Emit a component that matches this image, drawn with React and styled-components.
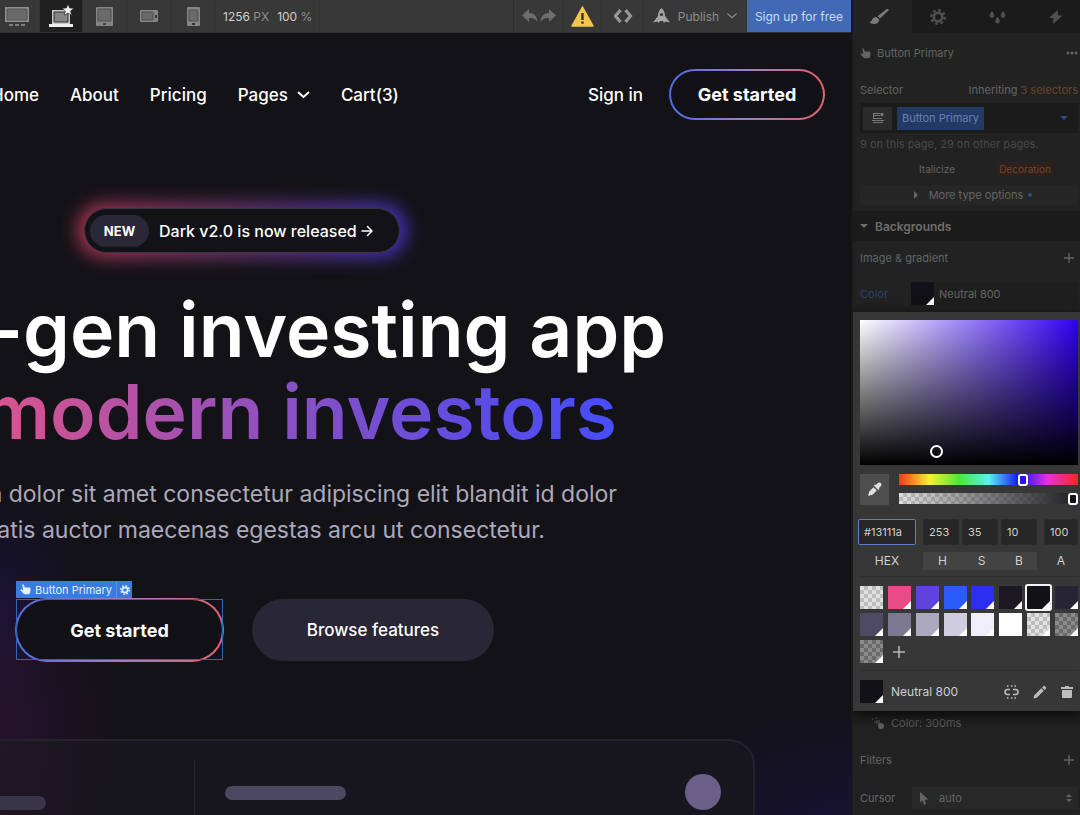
import React from "react";
import styled, { createGlobalStyle, css } from "styled-components";

const GlobalStyle = createGlobalStyle`
  *, *::before, *::after { box-sizing: border-box; }
  body { margin: 0; background: #131217; color: #fff; font-family: Inter, "Liberation Sans", sans-serif; overflow-x: hidden; }
  button, input, select { font: inherit; color: inherit; margin: 0; }
  button { border: 0; padding: 0; background: none; cursor: pointer; }
  a { color: inherit; text-decoration: none; }
  h1, h2, p { margin: 0; }
  svg { display: block; flex: none; }
`;

const Shell = styled.div`
  display: grid;
  grid-template-columns: minmax(0, 1fr) 229px;
  height: 100vh;
  overflow: hidden;
`;

const Stage = styled.div`
  display: flex;
  flex-direction: column;
  min-width: 0;
`;

/* ---------- top bar ---------- */

const Bar = styled.header`
  display: flex;
  flex: none;
  height: 33px;
  background: #383838;
  border-bottom: 1px solid #303030;
  font-size: 12px;
  color: #8d8d8d;
`;

const BarButton = styled.button`
  display: flex;
  align-items: center;
  justify-content: center;
  gap: 8px;
  width: ${(p) => p.$w}px;
  flex: none;
  border-right: 1px solid #323232;
  background: ${(p) => (p.$active ? "#202020" : "transparent")};
  &:first-child { padding-right: 6px; }
`;

const Zoom = styled.div`
  display: flex;
  align-items: center;
  gap: 8px;
  width: 105px;
  padding-left: 8px;
  white-space: nowrap;
  border-right: 1px solid #323232;
  b { font-weight: 400; color: #cfcfcf; }
`;

const BarGap = styled.div`
  flex: 1;
  border-right: 1px solid #303030;
`;

const SignUp = styled.a`
  display: flex;
  align-items: center;
  justify-content: center;
  width: 104px;
  height: 32px;
  background: #4169b5;
  color: #cbd8f3;
  white-space: nowrap;
`;

/* ---------- website canvas ---------- */

const Canvas = styled.main`
  flex: 1;
  display: flex;
  flex-direction: column;
  overflow: hidden;
  padding-top: 36px;
  background:
    radial-gradient(ellipse 140px 160px at -20px 690px, rgba(62, 18, 78, 0.5), transparent),
    radial-gradient(ellipse 110px 110px at -20px 560px, rgba(30, 20, 90, 0.5), transparent),
    radial-gradient(ellipse 240px 150px at 100% 104%, rgba(28, 20, 84, 0.55), transparent),
    #131217;
`;

const SiteNav = styled.nav`
  display: flex;
  align-items: center;
  flex: none;
  height: 51px;
  gap: 31px;
  margin-left: -9px;
  padding-right: 26px;
  font-size: 17px;
  font-weight: 500;
  white-space: nowrap;
`;

const NavLink = styled.a`
  display: flex;
  align-items: center;
  gap: 9px;
`;

const NavSide = styled.div`
  display: flex;
  align-items: center;
  gap: 26px;
  margin-left: auto;
`;

const GradientButton = styled.button`
  width: ${(p) => p.$w}px;
  height: ${(p) => p.$h}px;
  border: 2px solid transparent;
  border-radius: 32px;
  background:
    linear-gradient(#121116, #121116) padding-box,
    linear-gradient(90deg, #4f6be6, #9d80c4 50%, #e0626f) border-box;
  font-size: 18px;
  font-weight: 700;
`;

const Hero = styled.section`
  display: flex;
  flex-direction: column;
  align-items: flex-start;
  flex: none;
  padding-top: 88px;
`;

const Release = styled.a`
  position: relative;
  z-index: 0;
  display: flex;
  align-items: center;
  gap: 10px;
  width: 316px;
  height: 45px;
  margin-left: 84px;
  padding-left: 6px;
  border-radius: 24px;
  font-size: 16px;
  font-weight: 500;
  white-space: nowrap;
  &::before, &::after { content: ""; position: absolute; border-radius: 32px; }
  &::before {
    z-index: -2;
    inset: -5px -7px;
    background: linear-gradient(90deg, #c23a58, #7a3b80 50%, #4a38d8);
    filter: blur(9px);
    opacity: 0.85;
  }
  &::after {
    z-index: -1;
    inset: 0;
    background: #131217;
    border: 1px solid #3c3343;
  }
`;

const ReleaseText = styled.span`
  display: flex;
  align-items: center;
  gap: 4px;
`;

const NewTag = styled.span`
  display: flex;
  align-items: center;
  justify-content: center;
  width: 59px;
  height: 32px;
  border-radius: 16px;
  background: #2a2737;
  font-size: 13px;
  font-weight: 700;
`;

const Line = styled.span`
  display: flex;
  justify-content: flex-end;
  width: ${(p) => p.$w}px;
`;

const Headline = styled.h1`
  margin-top: 36px;
  font-size: 75px;
  line-height: 82px;
  font-weight: 600;
  white-space: nowrap;
`;

const Gradient = styled.span`
  background: linear-gradient(90deg, #dc548c, #8e50bf 45%, #5b4ce4 80%, #474dfb);
  background-clip: text;
  -webkit-background-clip: text;
  color: transparent;
`;

const Lead = styled.p`
  margin-top: 23px;
  font-size: 23px;
  line-height: 36px;
  color: #aca9ba;
  white-space: nowrap;
`;

const Actions = styled.div`
  display: flex;
  align-items: center;
  gap: 28px;
  margin-top: 50px;
  padding-left: 15px;
`;

const Selected = styled.div`
  position: relative;
  display: flex;
`;

const Outline = styled.div`
  position: absolute;
  inset: 1px 1px 2px;
  border: 1px solid #2f66b8;
  pointer-events: none;
`;

const SelectedTag = styled.div`
  position: absolute;
  left: 1px;
  top: -17px;
  display: flex;
  height: 17px;
  background: #3a7be0;
  font-size: 11px;
  white-space: nowrap;
  color: #e5eefc;
  span, button { display: flex; align-items: center; gap: 4px; }
  span { padding: 0 4px; }
  button { width: 16px; justify-content: center; border-left: 1px solid #5b92e8; }
`;

const SolidButton = styled.button`
  width: 242px;
  height: 62px;
  border-radius: 32px;
  background: #292635;
  font-size: 17px;
  font-weight: 500;
`;

const Mockup = styled.section`
  display: flex;
  flex: 1 0 76px;
  margin: 77px 96px 0 -40px;
  border: 2px solid #25222c;
  border-bottom: 0;
  border-top-right-radius: 26px;
  background: linear-gradient(90deg, rgba(38, 24, 40, 0.6), #17151e 160px);
`;

const MockSide = styled.div`
  width: 233px;
  margin-top: 20px;
  padding: 35px 0 0 38px;
  border-right: 1px solid #25232e;
`;

const MockMain = styled.div`
  display: flex;
  flex: 1;
  justify-content: space-between;
  padding: 33px 32px 0 30px;
`;

const Skeleton = styled.div`
  width: ${(p) => p.$w}px;
  height: 14px;
  margin-top: ${(p) => p.$top || 0}px;
  border-radius: ${(p) => (p.$open ? "0 8px 8px 0" : "8px")};
  background: ${(p) => p.$c};
`;

const Avatar = styled.div`
  width: 36px;
  height: 36px;
  border-radius: 50%;
  background: #6a5f88;
`;

/* ---------- style panel ---------- */

const Panel = styled.aside`
  display: flex;
  flex-direction: column;
  background: #222222;
  border-left: 2px solid #191919;
  color: #646464;
  font-size: 11px;
  overflow: hidden;
  white-space: nowrap;
`;

const Tabs = styled.div`
  display: flex;
  flex: none;
  height: 33px;
  background: #1b1b1b;
`;

const Tab = styled.button`
  display: flex;
  align-items: center;
  justify-content: center;
  flex: 0 0 59px;
  padding-right: 7px;
  background: ${(p) => (p.$active ? "#222222" : "transparent")};
  color: ${(p) => (p.$active ? "#7a7a7a" : "#505050")};
`;

const Row = styled.div`
  display: flex;
  align-items: center;
  flex: none;
  gap: ${(p) => p.$gap || 0}px;
  height: ${(p) => p.$h}px;
  padding: ${(p) => p.$pt || 0}px ${(p) => p.$pr ?? 6}px 0 ${(p) => p.$pl || 7}px;
`;

const Push = styled.span`
  margin-left: auto;
`;

const Orange = styled.span`
  color: #6b4229;
`;

const Note = styled.p`
  flex: none;
  padding-left: 7px;
  line-height: 22px;
  color: #484848;
`;

const SelectorBox = styled.div`
  display: flex;
  align-items: center;
  flex: none;
  gap: 5px;
  height: 30px;
  margin: 0 2px 0 7px;
  padding: 0 10px 0 3px;
  background: #1b1b1b;
  > svg { margin-left: auto; }
`;

const StateButton = styled.button`
  display: flex;
  align-items: center;
  justify-content: center;
  width: 29px;
  height: 23px;
  background: #2b2b2b;
  color: #777;
`;

const ClassChip = styled.button`
  height: 23px;
  padding: 0 5px;
  background: #233a67;
  color: #6780ad;
`;

const TypeRow = styled.div`
  display: grid;
  grid-template-columns: 88px 88px;
  align-items: center;
  justify-items: center;
  flex: none;
  height: 28px;
  padding-left: 40px;
  font-size: 10px;
`;

const Decoration = styled.span`
  padding: 1px 2px;
  color: #7a4228;
  background: #2c211d;
`;

const MoreButton = styled.button`
  display: flex;
  align-items: center;
  justify-content: center;
  gap: 9px;
  flex: none;
  height: 20px;
  margin: 2px 2px 6px 7px;
  padding-left: 6px;
  background: #262626;
`;

const Dot = styled.i`
  width: 4px;
  height: 4px;
  margin-left: -4px;
  border-radius: 50%;
  background: #2f4e86;
`;

const SectionHead = styled.h2`
  display: flex;
  align-items: center;
  gap: 7px;
  flex: none;
  height: 30px;
  padding-left: 7px;
  background: #1b1b1b;
  font-size: 12px;
  font-weight: 600;
  color: #6e6e6e;
`;

const ColorRow = styled.div`
  display: flex;
  align-items: center;
  flex: none;
  height: 37px;
  padding: 0 2px 0 7px;
`;

const ColorLabel = styled.span`
  width: 51px;
  color: #2c4266;
`;

const ColorValue = styled.div`
  display: flex;
  align-items: center;
  gap: 5px;
  flex: 1;
  height: 24px;
  background: #1f1f1f;
`;

const checker = "repeating-conic-gradient(#bdbdbd 0 25%, #e0e0e0 0 50%) 0 0 / 8px 8px";
const darkChecker = "repeating-conic-gradient(#6a6a6a 0 25%, #8a8a8a 0 50%) 0 0 / 8px 8px";

const Swatch = styled.button`
  position: relative;
  width: 23px;
  height: 23px;
  flex: none;
  background: ${(p) => p.$c};
  ${(p) => p.$on && css`
    border-radius: 1px;
    box-shadow: 0 0 0 2px #f2f2f2;
  `}
  ${(p) => !p.$plain && css`
    &::after {
      content: "";
      position: absolute;
      right: 0;
      bottom: 0;
      border: 4px solid #fff;
      border-top-color: transparent;
      border-left-color: transparent;
    }
  `}
`;

const Picker = styled.div`
  position: relative;
  z-index: 2;
  flex: none;
  padding: 8px 2px 8px 7px;
  background: #373737;
  color: #cfcfcf;
  box-shadow: 0 4px 12px 2px #0c0c0c;
`;

const Field = styled.div`
  position: relative;
  height: 145px;
  background:
    linear-gradient(transparent, #000),
    linear-gradient(90deg, #fff, #2f00f0);
`;

const Knob = styled.button`
  position: absolute;
  left: 35%;
  top: 90%;
  width: 13px;
  height: 13px;
  margin: -6px;
  border: 2px solid #fff;
  border-radius: 50%;
`;

const Sliders = styled.div`
  display: grid;
  grid-template-columns: 29px minmax(0, 1fr);
  grid-template-rows: 11px 11px;
  column-gap: 10px;
  row-gap: 8px;
  align-items: center;
  margin-top: 9px;
`;

const Dropper = styled.button`
  display: flex;
  align-items: center;
  justify-content: center;
  grid-row: 1 / 3;
  height: 31px;
  background: #4e4e4e;
  color: #e0e0e0;
`;

const Range = styled.input`
  appearance: none;
  width: 100%;
  height: 11px;
  background: ${(p) => p.$bg};
  &::-webkit-slider-thumb {
    appearance: none;
    width: 10px;
    height: 12px;
    border: 2px solid #fff;
    border-radius: 3px;
    background: ${(p) => p.$thumb};
  }
`;

const Fields = styled.div`
  display: grid;
  grid-template-columns: 58px 40px 36px 36px 38px;
  column-gap: 3px;
  margin: 15px 0 0 -2px;
`;

const FieldLabel = styled.label`
  display: flex;
  flex-direction: column;
  align-items: center;
  gap: 7px;
  margin-left: ${(p) => p.$ml || 0}px;
  font-size: 12px;
  span {
    align-self: stretch;
    margin: 0 ${(p) => (p.$fill ? "-3px" : "0")} 0 0;
    line-height: 18px;
    text-align: center;
    background: ${(p) => (p.$shade ? "#434343" : "transparent")};
  }
`;

const TextField = styled.input`
  width: 100%;
  height: 26px;
  padding: 0 5px;
  border: 1px solid ${(p) => (p.$focus ? "#5b7fc4" : "#2b2b2b")};
  border-radius: 2px;
  background: #272727;
  font-size: 11px;
  outline: 0;
`;

const Rule = styled.hr`
  height: 1px;
  margin: ${(p) => p.$m};
  border: 0;
  background: #303030;
`;

const Swatches = styled.div`
  display: grid;
  grid-template-columns: repeat(8, 23px);
  justify-content: space-between;
  row-gap: 4px;
`;

const AddButton = styled.button`
  display: flex;
  align-items: center;
  justify-content: center;
  color: #b5b5b5;
`;

const Current = styled.div`
  display: flex;
  align-items: center;
  gap: 8px;
  font-size: 12px;
`;

const Tools = styled.div`
  display: flex;
  align-items: center;
  gap: 14px;
  margin-left: auto;
  padding-right: 5px;
  color: #bdbdbd;
`;

const CursorLabel = styled.label`
  width: 52px;
`;

const CursorSelect = styled.div`
  display: flex;
  align-items: center;
  gap: 10px;
  flex: 1;
  height: 22px;
  padding: 0 6px 0 8px;
  background: #282828;
  select { flex: 1; appearance: none; border: 0; background: none; outline: 0; padding: 0; }
`;

/* ---------- icons ---------- */

const Svg = ({ w = 16, h, vb, children, ...rest }) => (
  <svg width={w} height={h || w} viewBox={vb || `0 0 ${w} ${h || w}`} fill="currentColor" aria-hidden="true" {...rest}>
    {children}
  </svg>
);

const Monitor = () => (
  <Svg w={26} h={20}>
    <path d="M1 1h24v15H1z" fill="#8f8f8f" />
    <path d="M3 3h20v11H3z" fill="#6a6a6a" stroke="#555" />
    <path d="M5 18h4v2H5zM11 18h4v2h-4zM17 18h4v2h-4z" fill="#7f7f7f" />
  </Svg>
);
const Laptop = () => (
  <Svg w={26} h={24}>
    <path d="M4 6h18v14H4z" fill="#c9c9c9" />
    <path d="M6 8h14v10H6z" fill="#858585" stroke="#333" />
    <path d="M1 20h24v3H1z" fill="#eee" />
    <path d="m20 0 1.600 4 4.200.3-3.200 2.700 1 4.200L20 9l-3.700 2.200 1-4.200-3.200-2.700 4.300-.3z" fill="#f0f0f0" stroke="#202020" strokeWidth=".6" />
  </Svg>
);
const Tablet = () => (
  <Svg w={17} h={19}>
    <rect width="17" height="19" rx="1" fill="#858585" />
    <path d="M2 2h13v12H2z" fill="#6a6a6a" stroke="#505050" />
    <path d="M7 16h3v2H7z" fill="#444" />
  </Svg>
);
const PhoneWide = () => (
  <Svg w={18} h={12}>
    <rect width="18" height="12" rx="1" fill="#858585" />
    <path d="M2 2h11v8H2z" fill="#6a6a6a" stroke="#505050" />
    <path d="M15 5h2v3h-2z" fill="#333" />
  </Svg>
);
const Phone = () => (
  <Svg w={13} h={19}>
    <rect width="13" height="19" rx="1" fill="#858585" />
    <path d="M2 3h9v11H2z" fill="#6a6a6a" stroke="#505050" />
    <path d="M5 16h3v2H5z" fill="#333" />
  </Svg>
);
const UndoRedo = () => (
  <Svg w={34} h={14} fill="#6d6d6d">
    <path d="M7 0v4c5 0 8 3 8.500 9C13 9.500 11 9 7 9v4L0 6.500z" />
    <path d="M27 0v4c-5 0-8 3-8.500 9 2.500-3.500 4.500-4 8.500-4v4l7-6.500z" />
  </Svg>
);
const Warning = () => (
  <Svg w={23} h={21}>
    <path d="M11.500 1 22 20H1z" fill="#f2c64d" stroke="#f2c64d" strokeWidth="1.500" strokeLinejoin="round" />
    <path d="M10.300 7h2.400v7h-2.400zM10.300 15.500h2.400v2.300h-2.400z" fill="#3b3420" />
  </Svg>
);
const Code = () => (
  <Svg w={20} h={14} fill="none" stroke="#969696" strokeWidth="3.200">
    <path d="M7.500 1 2.500 7l5 6M12.500 1l5 6-5 6" />
  </Svg>
);
const Rocket = () => (
  <Svg w={17} h={16} fill="#a5a5a5">
    <path d="M8.500 0C11 2 12 5 12 8l5 6.500-4.500-1L11 15l-1-2H7l-1 2-1.500-1.500-4.500 1L5 8c0-3 1-6 3.500-8z" />
    <circle cx="8.500" cy="6.500" r="1.600" fill="#383838" />
  </Svg>
);
const Chevron = ({ w = 10, s = 1.5 }) => (
  <Svg w={w} h={8} vb="0 0 12 8" fill="none" stroke="currentColor" strokeWidth={s} strokeLinecap="round">
    <path d="m1 1.500 5 4.500 5-4.500" />
  </Svg>
);
const Arrow = () => (
  <Svg w={12} h={12} fill="none" stroke="currentColor" strokeWidth="1.500" strokeLinecap="round" strokeLinejoin="round">
    <path d="M1 6h10M6.500 1.500 11 6l-4.500 4.500" />
  </Svg>
);
const Hand = ({ w = 11 }) => (
  <Svg w={w} vb="0 0 12 12">
    <path d="M2.500.5c.8-.6 1.500-.2 1.800.6l1 2.700h4.600c1.200 0 1.700.8 1.600 1.800l-.3 3.200c-.2 1.700-1 2.500-2.500 2.500H6c-1.200 0-2-.5-2.800-1.500L.5 6.800c-.4-.7.3-1.400 1.100-1L3.300 7z" />
  </Svg>
);
const Gear = ({ w = 16 }) => (
  <Svg w={w} vb="0 0 16 16" fill="none" stroke="currentColor">
    <circle cx="8" cy="8" r="4.200" strokeWidth="2.600" />
    <circle cx="8" cy="8" r="6.700" strokeWidth="2.400" strokeDasharray="2.630 2.630" />
  </Svg>
);
const Brush = () => (
  <Svg w={20} h={16}>
    <path d="m19.500 1.500-8.500 8-2.500-2.300L17.500.3c1.500-.8 2.800.2 2 1.200zM7.500 8l2.700 2.500c0 3-2.500 4.500-5.200 4.500-2 0-3.800-.7-5-2 2.500 0 2.500-1 3.300-2.800C4 8.700 5.500 7.700 7.500 8z" />
  </Svg>
);
const Drops = () => (
  <Svg w={17} h={14}>
    <path d="M3 1c1.200 2 2.300 3 2.300 4.600a2.300 2.300 0 0 1-4.600 0C.7 4 1.800 3 3 1zM14 1c1.200 2 2.300 3 2.300 4.600a2.300 2.300 0 0 1-4.600 0C11.700 4 12.800 3 14 1zM8.500 6.500c1.200 2 2.300 3 2.300 4.600a2.300 2.300 0 0 1-4.600 0c0-1.600 1.100-2.600 2.300-4.600z" />
  </Svg>
);
const Bolt = () => (
  <Svg w={14} h={14}>
    <path d="M8.500 0 0 8h4.500L4 14l9.500-8.500H9z" />
  </Svg>
);
const Plus = ({ w = 10 }) => (
  <Svg w={w} vb="0 0 12 12" fill="none" stroke="currentColor" strokeWidth="1.600">
    <path d="M6 0v12M0 6h12" />
  </Svg>
);
const Triangle = ({ right, c = "currentColor" }) => (
  <Svg w={8} h={8} fill={c}>
    <path d={right ? "M2 0v8l4-4z" : "M0 2h8L4 6z"} />
  </Svg>
);
const Breakpoint = () => (
  <Svg w={12} h={12}>
    <path d="M1 1h7v1H2v1h6v1H2v2h8v1H1zM0 8h12v1H0zM1 10h10v1H1z" />
    <circle cx="10" cy="2.500" r="1.700" />
  </Svg>
);
const DropperIcon = () => (
  <Svg w={14} h={14}>
    <path d="M9.600 1.200c1-1 2.300-1 3.200-.1s.9 2.200-.1 3.200l-1.900 1.900.7.700-1.200 1.200-4.500-4.500L7 2.400l.7.700zM5.500 5.200l3.300 3.300-4 4c-.6.600-1.600.5-2.300.6L1 14l-1-1 .9-1.500c.1-.7 0-1.700.6-2.300z" />
  </Svg>
);
const Unlink = () => (
  <Svg w={15} h={14} fill="none" stroke="currentColor" strokeWidth="1.500">
    <path d="M6 4.500H3.500a2.500 2.500 0 0 0 0 5H6M9 4.500h2.500a2.500 2.500 0 0 1 0 5H9" />
    <path d="M3 1h1.500M7 1h1.500M10.500 1H12M3 13h1.500M7 13h1.500M10.500 13H12" />
  </Svg>
);
const Pencil = () => (
  <Svg w={14} h={14}>
    <path d="M10.300 1.200c.5-.5 1-.5 1.500 0l1 1c.5.5.5 1 0 1.500l-1.200 1.200-2.500-2.500zM8.300 3.200l2.500 2.500-7 7L.5 13.500l.8-3.300z" />
  </Svg>
);
const Trash = () => (
  <Svg w={12} h={12}>
    <path d="M4 0h4v1h4v2H0V1h4zM1 4h10v6.500c0 1-.5 1.500-1.500 1.500h-7C1.500 12 1 11.500 1 10.500z" />
  </Svg>
);
const Transition = () => (
  <Svg w={12} h={12}>
    <path d="M0 1h2v2H0zM3 0h2v2H3zM2 4h2v2H2z" opacity=".5" />
    <path d="M4 3h4v4H4z" opacity=".6" />
    <circle cx="9" cy="9" r="3" />
  </Svg>
);
const Pointer = () => (
  <Svg w={9} h={13}>
    <path d="M0 0v10.500l2.500-2 1.700 4.200 2-.8-1.700-4.100L8.500 7.500z" />
  </Svg>
);
const UpDown = () => (
  <Svg w={6} h={8}>
    <path d="M0 3h6L3 0zM0 5h6L3 8z" />
  </Svg>
);
const More = () => (
  <Svg w={12} h={4}>
    <circle cx="2" cy="2" r="1.500" /><circle cx="6" cy="2" r="1.500" /><circle cx="10" cy="2" r="1.500" />
  </Svg>
);

/* ---------- data ---------- */

const devices = [
  ["Large desktop", Monitor, 40],
  ["Desktop", Laptop, 43],
  ["Tablet", Tablet, 44],
  ["Mobile landscape", PhoneWide, 45],
  ["Mobile portrait", Phone, 43],
];

const palette = [
  { c: checker, plain: true }, { c: "#e94b87" }, { c: "#6042dc" }, { c: "#2b5cfa" },
  { c: "#2c2ef0" }, { c: "#1b1823" }, { c: "#131118", on: true }, { c: "#272436" },
  { c: "#4f4a63" }, { c: "#7c7891" }, { c: "#aca8bd" }, { c: "#cfcbe0" },
  { c: "#f0eef8" }, { c: "#ffffff" }, { c: checker }, { c: darkChecker }, { c: darkChecker },
];

const hue = "linear-gradient(90deg, #f03a1e, #f5f032 17%, #4be83c 34%, #5cf0f0 50%, #1414f0 67%, #e632dc 83%, #f0281e)";
const alpha = `linear-gradient(90deg, transparent, #2b2b2f 92%), ${checker}`;

export default function App() {
  return (
    <>
      <GlobalStyle />
      <Shell>
        <Stage>
          <Bar>
            {devices.map(([name, Icon, w]) => (
              <BarButton key={name} aria-label={name} $w={w} $active={name === "Desktop"}>
                <Icon />
              </BarButton>
            ))}
            <Zoom>
              <span><b>1256</b> PX</span>
              <span><b>100</b> %</span>
            </Zoom>
            <BarGap />
            <BarButton $w={50} aria-label="Undo and redo"><UndoRedo /></BarButton>
            <BarButton $w={38} aria-label="Warnings"><Warning /></BarButton>
            <BarButton $w={42} aria-label="Export code"><Code /></BarButton>
            <BarButton $w={103}>
              <Rocket /> Publish <Chevron />
            </BarButton>
            <SignUp href="#signup">Sign up for free</SignUp>
          </Bar>

          <Canvas>
            <SiteNav>
              <NavLink href="#home">Home</NavLink>
              <NavLink href="#about">About</NavLink>
              <NavLink href="#pricing">Pricing</NavLink>
              <NavLink href="#pages">Pages <Chevron w={13} s={1.8} /></NavLink>
              <NavLink href="#cart">Cart(3)</NavLink>
              <NavSide>
                <NavLink href="#signin">Sign in</NavLink>
                <GradientButton $w={156} $h={51}>Get started</GradientButton>
              </NavSide>
            </SiteNav>

            <Hero>
              <Release href="#release">
                <NewTag>NEW</NewTag>
                <ReleaseText>Dark v2.0 is now released <Arrow /></ReleaseText>
              </Release>
              <Headline>
                <Line $w={666}>-gen investing app</Line>
                <Line $w={617}><Gradient>modern investors</Gradient></Line>
              </Headline>
              <Lead>
                <Line $w={617}>n dolor sit amet consectetur adipiscing elit blandit id dolor</Line>
                <Line $w={545}>natis auctor maecenas egestas arcu ut consectetur.</Line>
              </Lead>
              <Actions>
                <Selected>
                  <GradientButton $w={209} $h={64}>Get started</GradientButton>
                  <Outline />
                  <SelectedTag>
                    <span><Hand /> Button Primary</span>
                    <button aria-label="Element settings"><Gear w={10} /></button>
                  </SelectedTag>
                </Selected>
                <SolidButton>Browse features</SolidButton>
              </Actions>
            </Hero>

            <Mockup>
              <MockSide>
                <Skeleton $w={46} $c="#39354a" $open />
              </MockSide>
              <MockMain>
                <Skeleton $w={121} $top={12} $c="#4d4862" />
                <Avatar />
              </MockMain>
            </Mockup>
          </Canvas>
        </Stage>

        <Panel>
          <Tabs>
            <Tab $active aria-label="Style"><Brush /></Tab>
            <Tab aria-label="Settings"><Gear /></Tab>
            <Tab aria-label="Effects"><Drops /></Tab>
            <Tab aria-label="Interactions"><Bolt /></Tab>
          </Tabs>
          <Row $h={40} $gap={6} $pr={2}>
            <Hand /> Button Primary
            <Push><More /></Push>
          </Row>
          <Row $h={30} $pt={4} $pr={2}>
            Selector
            <Push>Inheriting <Orange>3 selectors</Orange></Push>
          </Row>
          <SelectorBox>
            <StateButton aria-label="Breakpoint"><Breakpoint /></StateButton>
            <ClassChip>Button Primary</ClassChip>
            <Triangle c="#2e4a80" />
          </SelectorBox>
          <Note>9 on this page, 29 on other pages.</Note>
          <TypeRow>
            <span>Italicize</span>
            <Decoration>Decoration</Decoration>
          </TypeRow>
          <MoreButton><Triangle right /> More type options <Dot /></MoreButton>
          <SectionHead><Triangle /> Backgrounds</SectionHead>
          <Row $h={34}>
            Image &amp; gradient
            <Push><Plus /></Push>
          </Row>
          <ColorRow>
            <ColorLabel>Color</ColorLabel>
            <ColorValue><Swatch $c="#131118" aria-label="Background color" /> Neutral 800</ColorValue>
          </ColorRow>

          <Picker>
            <Field><Knob aria-label="Saturation and brightness" /></Field>
            <Sliders>
              <Dropper aria-label="Pick color"><DropperIcon /></Dropper>
              <Range type="range" aria-label="Hue" min="0" max="360" defaultValue="253" $bg={hue} $thumb="#2a10e8" />
              <Range type="range" aria-label="Alpha" min="0" max="100" defaultValue="100" $bg={alpha} $thumb="#131118" />
            </Sliders>
            <Fields>
              <FieldLabel><TextField $focus defaultValue="#13111a" /><span>HEX</span></FieldLabel>
              <FieldLabel $ml={4} $shade $fill><TextField defaultValue="253" /><span>H</span></FieldLabel>
              <FieldLabel $shade $fill><TextField defaultValue="35" /><span>S</span></FieldLabel>
              <FieldLabel $shade><TextField defaultValue="10" /><span>B</span></FieldLabel>
              <FieldLabel $ml={4}><TextField defaultValue="100" /><span>A</span></FieldLabel>
            </Fields>
            <Rule $m="6px 0 9px" />
            <Swatches>
              {palette.map((s, i) => (
                <Swatch key={i} $c={s.c} $plain={s.plain} $on={s.on} aria-label={`Swatch ${i + 1}`} />
              ))}
              <AddButton aria-label="Add swatch"><Plus w={12} /></AddButton>
            </Swatches>
            <Rule $m="7px 0 9px" />
            <Current>
              <Swatch $c="#131118" aria-label="Current swatch" />
              Neutral 800
              <Tools>
                <button aria-label="Unlink"><Unlink /></button>
                <button aria-label="Edit"><Pencil /></button>
                <button aria-label="Delete"><Trash /></button>
              </Tools>
            </Current>
          </Picker>

          <Row $h={24} $gap={7} $pl={19}><Transition /> Color: 300ms</Row>
          <Row $h={50}>
            Filters
            <Push><Plus /></Push>
          </Row>
          <Row $h={26} $pr={2}>
            <CursorLabel htmlFor="cursor">Cursor</CursorLabel>
            <CursorSelect>
              <Pointer />
              <select id="cursor" defaultValue="auto"><option>auto</option></select>
              <UpDown />
            </CursorSelect>
          </Row>
        </Panel>
      </Shell>
    </>
  );
}
